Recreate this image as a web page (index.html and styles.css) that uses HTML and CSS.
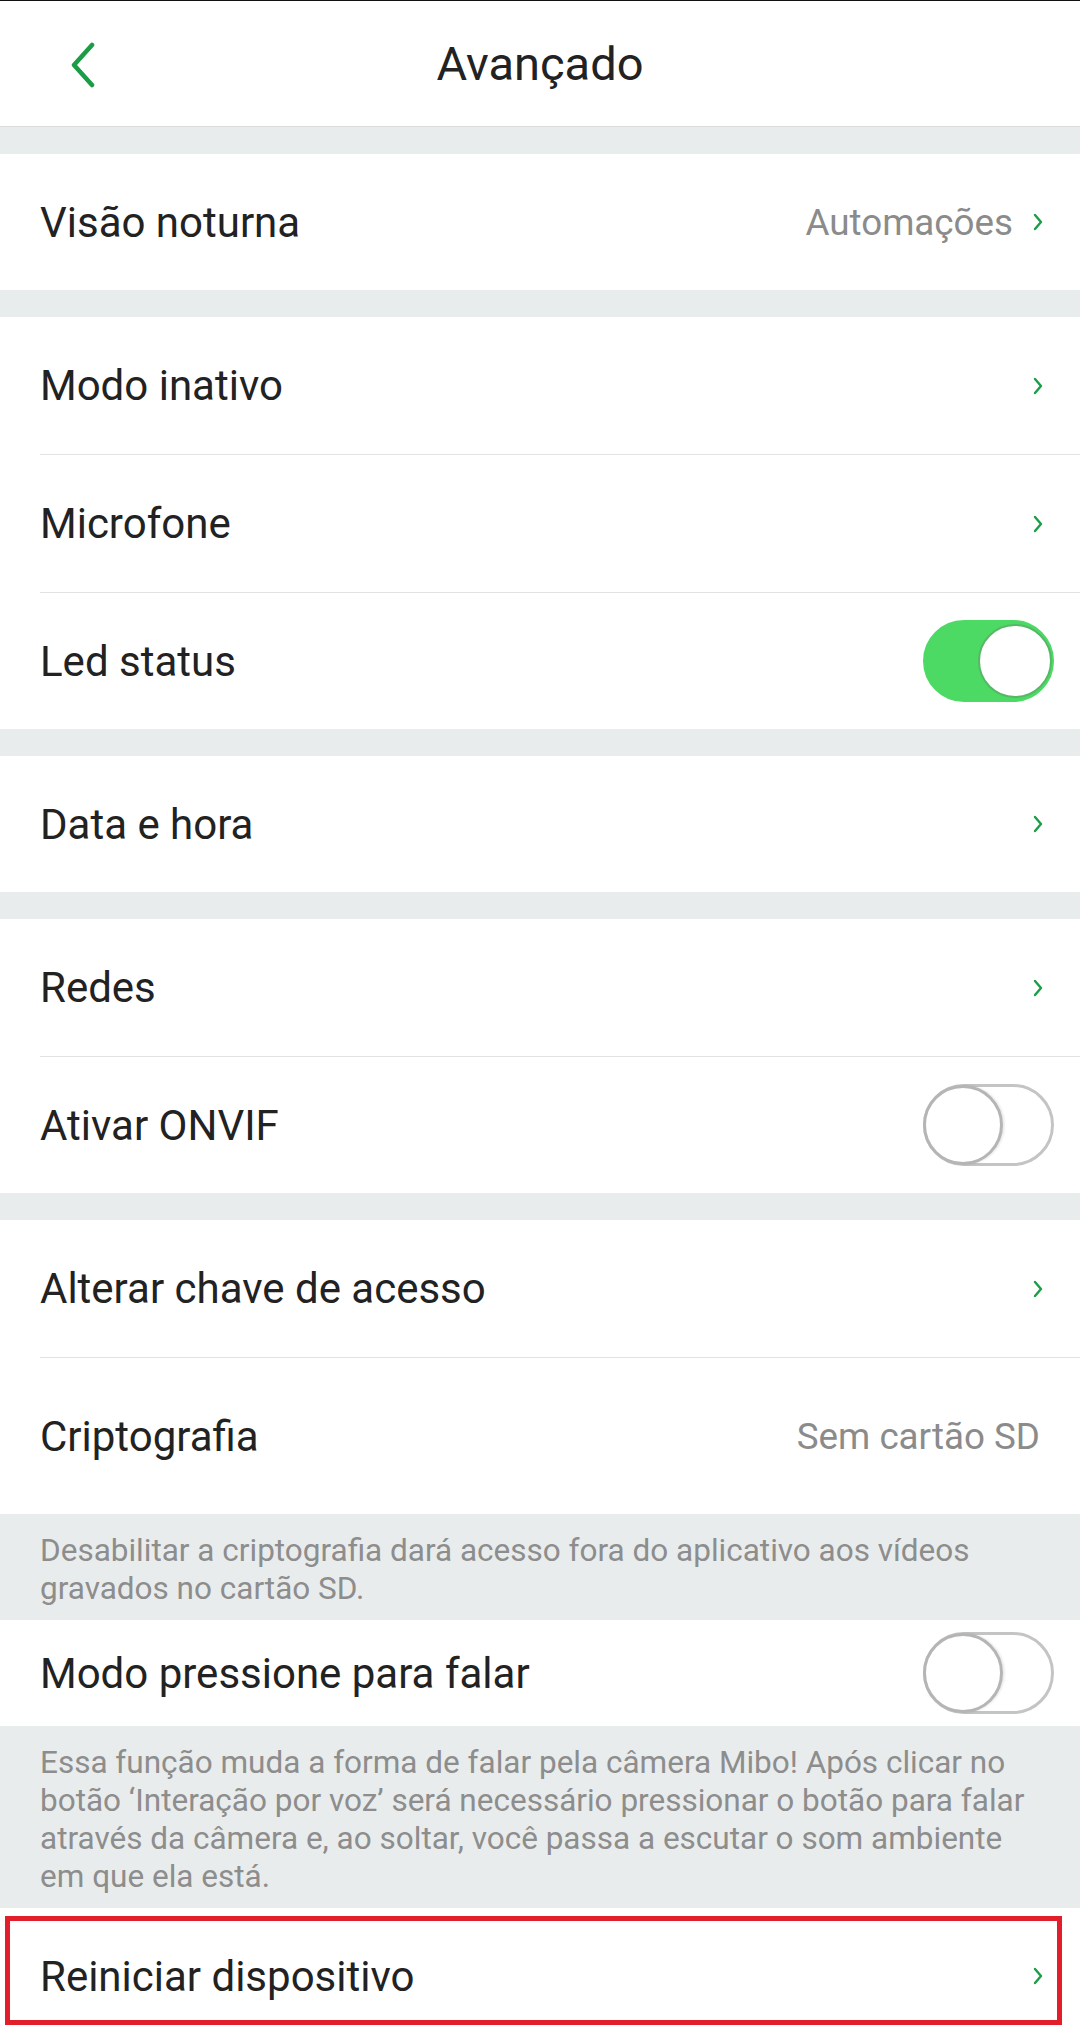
FILE: index.html
```html
<!DOCTYPE html>
<html lang="pt">
<head>
    <meta charset="UTF-8">
    <meta name="viewport" content="width=device-width, initial-scale=1.0">
    <title>Avançado</title>
    <link rel="stylesheet" href="styles.css">
</head>
<body>
    <header class="top-bar">
        <a class="back" href="#">
            <svg width="26" height="46" viewBox="0 0 26 46"><polyline points="22,3 4,23 22,43" fill="none" stroke="#1b9d47" stroke-width="4.5" stroke-linecap="round" stroke-linejoin="round"/></svg>
        </a>
        <h1>Avançado</h1>
    </header>

    <section class="group">
        <div class="row">
            <div class="row-body">
                <span class="label">Visão noturna</span>
                <span class="value">Automações</span>
                <svg class="chev" width="12" height="20" viewBox="0 0 12 20"><polyline points="3,3 9,10 3,17" fill="none" stroke="#1b9d47" stroke-width="2.4" stroke-linecap="round" stroke-linejoin="round"/></svg>
            </div>
        </div>
    </section>

    <section class="group">
        <div class="row">
            <div class="row-body">
                <span class="label">Modo inativo</span>
                <svg class="chev" width="12" height="20" viewBox="0 0 12 20"><polyline points="3,3 9,10 3,17" fill="none" stroke="#1b9d47" stroke-width="2.4" stroke-linecap="round" stroke-linejoin="round"/></svg>
            </div>
        </div>
        <div class="row">
            <div class="row-body">
                <span class="label">Microfone</span>
                <svg class="chev" width="12" height="20" viewBox="0 0 12 20"><polyline points="3,3 9,10 3,17" fill="none" stroke="#1b9d47" stroke-width="2.4" stroke-linecap="round" stroke-linejoin="round"/></svg>
            </div>
        </div>
        <div class="row">
            <div class="row-body">
                <span class="label">Led status</span>
                <span class="switch on"><span class="knob"></span></span>
            </div>
        </div>
    </section>

    <section class="group">
        <div class="row">
            <div class="row-body">
                <span class="label">Data e hora</span>
                <svg class="chev" width="12" height="20" viewBox="0 0 12 20"><polyline points="3,3 9,10 3,17" fill="none" stroke="#1b9d47" stroke-width="2.4" stroke-linecap="round" stroke-linejoin="round"/></svg>
            </div>
        </div>
    </section>

    <section class="group">
        <div class="row">
            <div class="row-body">
                <span class="label">Redes</span>
                <svg class="chev" width="12" height="20" viewBox="0 0 12 20"><polyline points="3,3 9,10 3,17" fill="none" stroke="#1b9d47" stroke-width="2.4" stroke-linecap="round" stroke-linejoin="round"/></svg>
            </div>
        </div>
        <div class="row">
            <div class="row-body">
                <span class="label">Ativar ONVIF</span>
                <span class="switch"><span class="knob"></span></span>
            </div>
        </div>
    </section>

    <section class="group">
        <div class="row">
            <div class="row-body">
                <span class="label">Alterar chave de acesso</span>
                <svg class="chev" width="12" height="20" viewBox="0 0 12 20"><polyline points="3,3 9,10 3,17" fill="none" stroke="#1b9d47" stroke-width="2.4" stroke-linecap="round" stroke-linejoin="round"/></svg>
            </div>
        </div>
        <div class="row tall">
            <div class="row-body">
                <span class="label">Criptografia</span>
                <span class="value no-chev">Sem cartão SD</span>
            </div>
        </div>
    </section>

    <p class="note">Desabilitar a criptografia dará acesso fora do aplicativo aos vídeos<br>gravados no cartão SD.</p>

    <section class="group flush">
        <div class="row short">
            <div class="row-body">
                <span class="label">Modo pressione para falar</span>
                <span class="switch"><span class="knob"></span></span>
            </div>
        </div>
    </section>

    <p class="note">Essa função muda a forma de falar pela câmera Mibo! Após clicar no<br>botão ‘Interação por voz’ será necessário pressionar o botão para falar<br>através da câmera e, ao soltar, você passa a escutar o som ambiente<br>em que ela está.</p>

    <section class="group flush">
        <div class="row highlighted">
            <div class="row-body">
                <span class="label">Reiniciar dispositivo</span>
                <svg class="chev" width="12" height="20" viewBox="0 0 12 20"><polyline points="3,3 9,10 3,17" fill="none" stroke="#1b9d47" stroke-width="2.4" stroke-linecap="round" stroke-linejoin="round"/></svg>
            </div>
        </div>
    </section>
</body>
</html>
```

FILE: styles.css
```css
body {
    margin: 0;
    padding: 0;
    font-family: Roboto, "Noto Sans", Arial, sans-serif;
    background-color: #e9ecec;
    color: #222;
    overflow: hidden;
}
.top-bar {
    height: 125px;
    background: white;
    border-top: 1px solid #111;
    border-bottom: 1px solid #dcdcdc;
    display: flex;
    align-items: center;
    justify-content: center;
    position: relative;
}
.top-bar h1 {
    margin: 0;
    font-size: 47px;
    font-weight: 400;
    color: #222;
}
.back {
    position: absolute;
    left: 70px;
    top: 41px;
    display: block;
    line-height: 0;
}
.group {
    background: white;
    margin-top: 27px;
}
.group.flush {
    margin-top: 0;
}
.row {
    padding-left: 40px;
}
.row-body {
    height: 137px;
    display: flex;
    align-items: center;
    padding-right: 36px;
    border-bottom: 1px solid #e2e2e2;
}
.row:last-child .row-body {
    border-bottom: none;
    height: 136px;
}
.row.tall .row-body {
    height: 156px;
}
.row.short .row-body {
    height: 106px;
}
.label {
    flex: 1;
    font-size: 42px;
}
.value {
    font-size: 36.75px;
    color: #8b8b8b;
    margin-right: 19px;
}
.value.no-chev {
    margin-right: 4px;
}
.chev {
    display: block;
}
.switch {
    width: 131px;
    height: 82px;
    box-sizing: border-box;
    border-radius: 41px;
    border: 3px solid #c4c4c4;
    background: white;
    display: flex;
    align-items: center;
    margin-right: -10px;
}
.switch .knob {
    width: 80px;
    height: 80px;
    box-sizing: border-box;
    border-radius: 50%;
    background: white;
    border: 3px solid #b5b5b5;
    margin-left: -3px;
    box-shadow: 2px 0 2px rgba(0, 0, 0, 0.08);
}
.switch.on {
    background: #4cd964;
    border-color: #4cd964;
    justify-content: flex-end;
}
.switch.on .knob {
    width: 74px;
    height: 74px;
    border: 2px solid #55b865;
    margin-left: 0;
    margin-right: -1px;
    box-shadow: none;
}
.note {
    margin: 0;
    padding: 18px 20px 12px 40px;
    font-size: 31.5px;
    line-height: 38px;
    color: #8d8d8d;
    white-space: nowrap;
}
.row.highlighted {
    position: relative;
}
.row.highlighted::after {
    content: "";
    position: absolute;
    top: 8px;
    left: 5px;
    right: 18px;
    height: 109px;
    border: 5px solid #e31e2b;
    box-sizing: border-box;
}
```
